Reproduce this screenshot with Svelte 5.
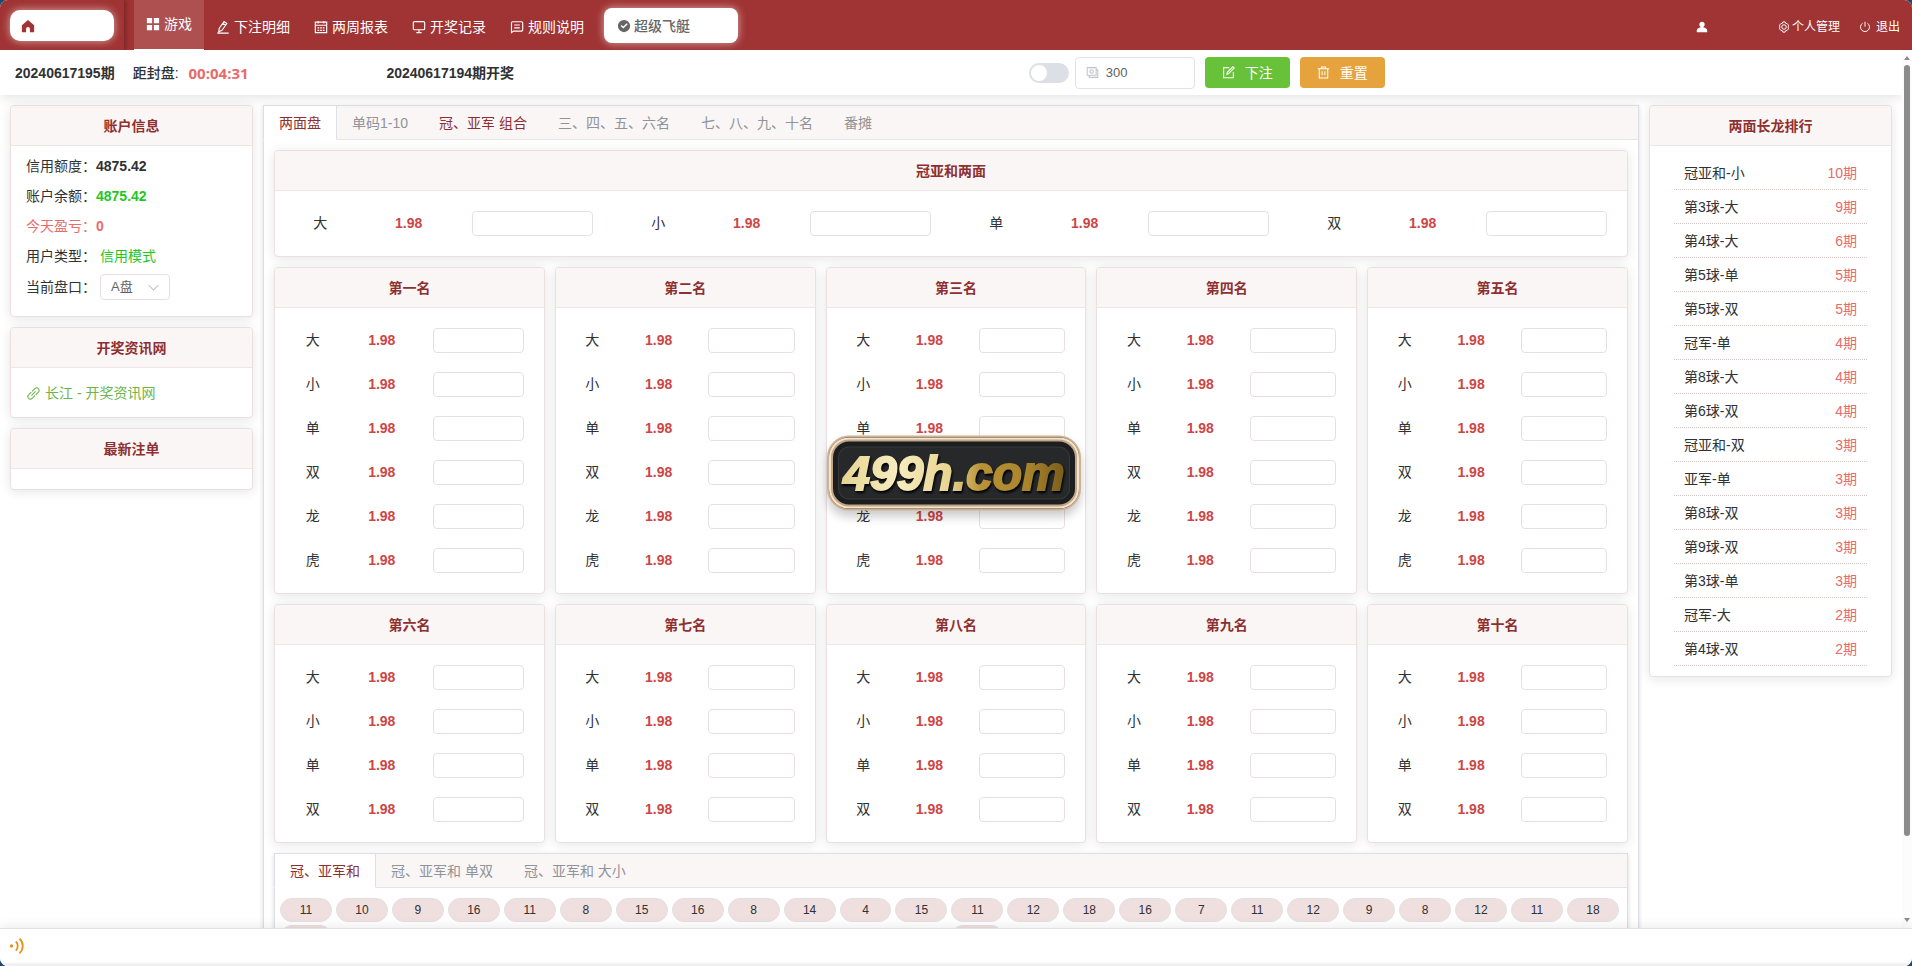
<script lang="ts">
	type Icon = { d: string; solid?: boolean };

	const icons: Record<string, Icon> = {
		home: { d: 'M8 1.2 15 7v8H10.2v-3.6a2.2 2.2 0 0 0-4.4 0V15H1V7z', solid: true },
		grid: { d: 'M1 1h6v6H1zM9 1h6v6H9zM1 9h6v6H1zM9 9h6v6H9z', solid: true },
		edit: { d: 'M9.2 1.8 3.6 9.6 3.2 13.6 6.8 11.8 12.4 4zM7.8 3.8 11 6.1M1.5 15h13' },
		calendar: { d: 'M1.5 2.5h13v12h-13zM1.5 6h13M4.8 1v3M11.2 1v3M4 9h2M7 9h2M10 9h2M4 11.8h2M7 11.8h2M10 11.8h2' },
		monitor: { d: 'M3 1.8h10a1.5 1.5 0 0 1 1.5 1.5v6.4a1.5 1.5 0 0 1-1.5 1.5H3a1.5 1.5 0 0 1-1.5-1.5V3.300A1.5 1.5 0 0 1 3 1.800zM8 11.200V14.500M5 14.500h6' },
		message: { d: 'M1.700 14.500V3.200a1.200 1.200 0 0 1 1.200-1.200h10.400a1.200 1.200 0 0 1 1.200 1.200v8.300a1.200 1.200 0 0 1-1.200 1.200H4zM4.800 5.700h6.400M4.800 9h6.400' },
		check: { d: 'M8 1a7 7 0 1 0 0 14A7 7 0 0 0 8 1zM7.200 10.900 4.200 7.900l1.100-1.100 1.900 1.900 3.900-3.900 1.100 1.100z', solid: true },
		user: { d: 'M8 1a3.600 3.600 0 0 1 2.200 6.500l-.6.9c3 .4 5.400 2 5.400 5V15H1v-1.600c0-3 2.400-4.600 5.400-5l-.6-.9A3.600 3.600 0 0 1 8 1z', solid: true },
		setting: { d: 'M6.500 1.200h3l.7 1.900 2 .3 1.900 2.400-.7 2.200.7 2.200-1.900 2.400-2 .3-.7 1.900h-3l-.7-1.900-2-.3-1.900-2.400.7-2.200-.7-2.200 1.900-2.400 2-.3zM8 5a3 3 0 1 0 0 6 3 3 0 0 0 0-6z' },
		power: { d: 'M4.800 3a6 6 0 1 0 6.400 0M8 1v6.500' },
		money: { d: 'M1.500 2h11v9.500h-11zM12.500 4.500h2V14H4v-2.500M7 4.500a2.200 2.200 0 1 0 0 4.400 2.200 2.200 0 0 0 0-4.400z' },
		compose: { d: 'M9 2H2v12.500h12V7.500M6 10.300l.5-2.500L13.500.8l1.600 1.600-7 7z' },
		trash: { d: 'M1 3.500h14M5.500 3.500V1.200h5v2.300M2.800 3.500v11.300h10.400V3.500M6.300 6.500v5M9.700 6.500v5' },
		link: { d: 'M5.500 10.500 10.500 5.500M6.300 5.300 9.600 2a3 3 0 0 1 4.400 4.400l-3.300 3.300M9.700 10.700 6.400 14A3 3 0 0 1 2 9.600l3.300-3.300' },
		arrow: { d: 'M2 5l6 6 6-6' },
		sound: { d: 'M2.500 7.200a.8.8 0 1 1 0 1.600.8.8 0 0 1 0-1.600M6.800 3.500c2.600 2.200 2.600 6.800 0 9M10.500 .8c4.300 3.600 4.300 10.800 0 14.400' }
	};

	const menu = [
		{ icon: 'edit', label: '下注明细' },
		{ icon: 'calendar', label: '两周报表' },
		{ icon: 'monitor', label: '开奖记录' },
		{ icon: 'message', label: '规则说明' }
	];

	const tabs = [
		{ label: '两面盘', active: true },
		{ label: '单码1-10' },
		{ label: '冠、亚军 组合', marked: true },
		{ label: '三、四、五、六名' },
		{ label: '七、八、九、十名' },
		{ label: '番摊' }
	];

	const ranks = ['冠、亚军和', '冠、亚军和 单双', '冠、亚军和 大小'];

	const sides = ['大', '小', '单', '双'];
	const groupRows = [
		{ names: ['第一名', '第二名', '第三名', '第四名', '第五名'], bets: [...sides, '龙', '虎'] },
		{ names: ['第六名', '第七名', '第八名', '第九名', '第十名'], bets: sides }
	];

	// each entry is one column of the road map, top to bottom
	const history = [
		['11', ''], ['10'], ['9'], ['16'], ['11'], ['8'], ['15'], ['16'], ['8'], ['14'], ['4'], ['15'],
		['11', ''], ['12'], ['18'], ['16'], ['7'], ['11'], ['12'], ['9'], ['8'], ['12'], ['11'], ['18']
	];

	const streaks: [string, number][] = [
		['冠亚和-小', 10],
		['第3球-大', 9],
		['第4球-大', 6],
		['第5球-单', 5],
		['第5球-双', 5],
		['冠军-单', 4],
		['第8球-大', 4],
		['第6球-双', 4],
		['冠亚和-双', 3],
		['亚军-单', 3],
		['第8球-双', 3],
		['第9球-双', 3],
		['第3球-单', 3],
		['冠军-大', 2],
		['第4球-双', 2]
	];

	let amount = $state('300');
	let quick = $state(false);
</script>

{#snippet icon(name: string)}
	<svg class="icon" class:solid={icons[name].solid} viewBox="0 0 16 16" aria-hidden="true">
		<path d={icons[name].d} />
	</svg>
{/snippet}

{#snippet bet(group: string, label: string)}
	<label class="bet">
		<span class="bet-name">{label}</span>
		<span class="odds">1.98</span>
		<input type="text" aria-label="{group} {label}" />
	</label>
{/snippet}

<div class="app">
	<header class="topbar">
		<div class="brand">
			<a href="#home" class="logo" aria-label="首页">{@render icon('home')}</a>
		</div>
		<nav class="menu">
			<a href="#game" class="menu-game">{@render icon('grid')}游戏</a>
			{#each menu as item}
				<a href="#menu" class="menu-item">{@render icon(item.icon)}{item.label}</a>
			{/each}
		</nav>
		<button class="game-picker">{@render icon('check')}超级飞艇</button>
		<div class="account">
			<span class="user">{@render icon('user')}</span>
			<a href="#profile" class="profile">{@render icon('setting')}个人管理</a>
			<a href="#logout" class="logout">{@render icon('power')}退出</a>
		</div>
	</header>

	<div class="body">
		<div class="page">
			<div class="toolbar">
				<div class="period">
					<b>20240617195期</b>
					<span>距封盘:</span>
					<b class="countdown">00:04:31</b>
				</div>
				<b>20240617194期开奖</b>
				<div class="actions">
					<input class="switch" type="checkbox" role="switch" aria-label="快捷" bind:checked={quick} />
					<label class="amount">
						{@render icon('money')}
						<input type="text" aria-label="金额" bind:value={amount} />
					</label>
					<button class="btn submit">{@render icon('compose')}下注</button>
					<button class="btn reset">{@render icon('trash')}重置</button>
				</div>
			</div>

			<div class="columns">
				<aside>
					<section class="card">
						<h2>账户信息</h2>
						<div class="info">
							<div>信用额度：<b>4875.42</b></div>
							<div>账户余额：<b class="green">4875.42</b></div>
							<div class="loss">今天盈亏：<b>0</b></div>
							<div>用户类型：<span class="green value">信用模式</span></div>
							<div class="plate">
								<label for="plate">当前盘口：</label>
								<span class="select">
									<select id="plate"><option>A盘</option></select>
									{@render icon('arrow')}
								</span>
							</div>
						</div>
					</section>
					<section class="card">
						<h2>开奖资讯网</h2>
						<div class="links">
							<a href="#news">{@render icon('link')}长江 - 开奖资讯网</a>
						</div>
					</section>
					<section class="card">
						<h2>最新注单</h2>
						<div class="orders"></div>
					</section>
				</aside>

				<main class="tab-box">
					<div class="tabs">
						{#each tabs as tab}
							<button class:active={tab.active} class:marked={tab.marked}>{tab.label}</button>
						{/each}
					</div>
					<div class="panel">
						<section class="card">
							<h2>冠亚和两面</h2>
							<div class="bets bets-row">
								{#each sides as side}
									{@render bet('冠亚和', side)}
								{/each}
							</div>
						</section>

						{#each groupRows as row}
							<div class="groups">
								{#each row.names as name}
									<div class="group">
										<section class="card">
											<h2>{name}</h2>
											<div class="bets">
												{#each row.bets as side}
													{@render bet(name, side)}
												{/each}
											</div>
										</section>
									</div>
								{/each}
							</div>
						{/each}

						<section class="tab-box">
							<div class="tabs">
								{#each ranks as rank, i}
									<button class:active={i === 0}>{rank}</button>
								{/each}
							</div>
							<div class="history">
								{#each history as column}
									<div class="history-col">
										{#each column as num}
											<span>{num}</span>
										{/each}
									</div>
								{/each}
							</div>
						</section>
					</div>
				</main>

				<aside>
					<section class="card">
						<h2>两面长龙排行</h2>
						<ul class="streaks">
							{#each streaks as [name, count]}
								<li><span>{name}</span><span class="count">{count}期</span></li>
							{/each}
						</ul>
					</section>
				</aside>
			</div>
		</div>
		<div class="scrollbar">
			<i class="up"></i>
			<i class="thumb"></i>
			<i class="down"></i>
		</div>
	</div>

	<footer>{@render icon('sound')}</footer>

	<div class="badge"><span>499h.com</span></div>
</div>

<style>
	:global(body) {
		background: #1b4b73;
		overflow: hidden;
	}

	.app {
		position: relative;
		display: flex;
		flex-direction: column;
		height: 100vh;
		border-radius: 8px;
		overflow: hidden;
		background: #fff;
		color: #303133;
		font-family: 'Liberation Sans', 'Noto Sans CJK SC', sans-serif;
		font-size: 14px;
		line-height: 20px;
	}

	.app * {
		box-sizing: border-box;
	}

	a {
		color: inherit;
		text-decoration: none;
	}

	button,
	input,
	select {
		font: inherit;
		color: inherit;
		margin: 0;
	}

	.icon {
		width: 14px;
		height: 14px;
		flex-shrink: 0;
		fill: none;
		stroke: currentColor;
		stroke-width: 1.3;
	}

	.icon.solid {
		fill: currentColor;
		fill-rule: evenodd;
		stroke: none;
	}

	/* Top bar */
	.topbar {
		display: flex;
		flex-shrink: 0;
		height: 50px;
		background: #a03333;
		color: #fff;
	}

	.brand {
		width: 124px;
		padding: 10px;
		box-shadow: 2px 0 4px rgba(0, 0, 0, 0.25);
	}

	.logo {
		display: flex;
		align-items: center;
		height: 31px;
		padding-left: 11px;
		border-radius: 10px;
		background: #fff;
		color: #a03333;
		box-shadow: 0 0 8px rgba(255, 255, 255, 0.6);
	}

	.menu {
		display: flex;
		margin-left: 10px;
	}

	.menu a {
		display: flex;
		align-items: center;
		gap: 4px;
		padding: 4px 12px 0;
	}

	.menu .menu-game {
		padding: 0 12px 1px;
		border-bottom: 1px solid #fff;
		background: #ae4f50;
	}

	.game-picker {
		display: flex;
		align-items: center;
		gap: 3px;
		width: 134px;
		height: 35px;
		margin: 8px 0 0 8px;
		padding: 0 13px;
		border: 0;
		border-radius: 8px;
		background: #fff;
		color: #666;
		font-weight: 500;
		box-shadow: 0 0 8px rgba(255, 255, 255, 0.6);
	}

	.account {
		display: flex;
		align-items: center;
		margin-left: auto;
		padding: 4px 12px 0 0;
		font-size: 12px;
	}

	.account .icon {
		width: 12px;
		height: 12px;
	}

	.user,
	.profile,
	.logout {
		display: flex;
		align-items: center;
		gap: 2px;
	}

	.user {
		margin-right: 70px;
	}

	.logout {
		gap: 5px;
		margin-left: 19px;
	}

	/* Page */
	.body {
		display: flex;
		flex: 1;
		min-height: 0;
	}

	.page {
		flex: 1;
		min-width: 0;
		overflow: hidden;
	}

	.toolbar {
		position: relative;
		display: grid;
		grid-template-columns: 37fr 64fr 87fr;
		align-items: center;
		height: 45px;
		padding-left: 15px;
		background: #fff;
		box-shadow: 0 2px 12px rgba(0, 0, 0, 0.12);
	}

	.period {
		display: flex;
		align-items: center;
	}

	.period span {
		margin: 0 10px 0 18px;
		font-weight: 500;
	}

	.countdown {
		color: #e66b6b;
		font-family: 'Open Sans', 'Noto Sans', sans-serif;
		font-size: 15px;
		line-height: 18px;
	}

	.actions {
		display: flex;
		align-items: center;
	}

	.switch {
		position: relative;
		appearance: none;
		width: 40px;
		height: 20px;
		margin-right: 6px;
		border-radius: 10px;
		background: #dcdfe6;
	}

	.switch::before {
		content: '';
		position: absolute;
		top: 2px;
		left: 2px;
		width: 16px;
		height: 16px;
		border-radius: 50%;
		background: #fff;
	}

	.switch:checked {
		background: #a03333;
	}

	.switch:checked::before {
		left: 22px;
	}

	.amount {
		display: flex;
		align-items: center;
		gap: 7px;
		width: 120px;
		height: 32px;
		margin-right: 10px;
		padding: 0 10px;
		border: 1px solid #e8dfe0;
		border-radius: 4px;
		color: #c0c4cc;
	}

	.amount .icon {
		width: 13px;
		height: 13px;
	}

	.amount input {
		width: 100%;
		min-width: 0;
		padding: 0;
		border: 0;
		outline: 0;
		color: #606266;
		font-size: 13px;
	}

	.btn {
		display: flex;
		align-items: center;
		justify-content: center;
		gap: 10px;
		width: 85px;
		height: 31px;
		margin-right: 10px;
		border: 0;
		border-radius: 4px;
		color: #fff;
	}

	.btn .icon {
		width: 13px;
		height: 13px;
	}

	.submit {
		background: #67c23a;
	}

	.reset {
		background: #e6a23c;
	}

	.columns {
		display: flex;
		align-items: flex-start;
		gap: 10px;
		padding: 10px;
	}

	aside {
		display: flex;
		flex-direction: column;
		flex-shrink: 0;
		gap: 10px;
		width: 243px;
	}

	/* Cards */
	.card {
		border: 1px solid #ebdfe0;
		border-radius: 4px;
		background: #fff;
		box-shadow: 0 2px 12px rgba(0, 0, 0, 0.1);
		overflow: hidden;
	}

	.card h2 {
		height: 40px;
		margin: 0;
		border-bottom: 1px solid #f0e6e6;
		background: #faf6f5;
		color: #8e3031;
		font-size: 14px;
		font-weight: 700;
		line-height: 40px;
		text-align: center;
	}

	.info {
		padding: 5px 15px 13px;
		line-height: 30px;
	}

	.green {
		color: #1fc71f;
	}

	.value {
		margin-left: 4px;
	}

	.loss {
		color: #e66b6b;
	}

	.plate {
		display: flex;
		align-items: center;
		height: 32px;
	}

	.select {
		position: relative;
		margin-left: 4px;
		color: #606266;
		font-size: 13px;
	}

	.select select {
		display: block;
		appearance: none;
		width: 70px;
		height: 26px;
		padding: 0 10px;
		border: 1px solid #e8dfe0;
		border-radius: 4px;
		background: #fff;
		line-height: 20px;
	}

	.select .icon {
		position: absolute;
		top: 7px;
		right: 10px;
		width: 13px;
		height: 13px;
		color: #c0c4cc;
		pointer-events: none;
	}

	.links {
		padding: 15px 16px 14px;
		color: #6cb54a;
	}

	.links a {
		display: flex;
		align-items: center;
		gap: 5px;
	}

	.links .icon {
		width: 13px;
		height: 13px;
	}

	.orders {
		height: 20px;
	}

	/* Tabs */
	.tab-box {
		flex: 1;
		min-width: 0;
		border: 1px solid #dcdfe6;
		background: #fff;
		box-shadow: 0 2px 4px rgba(0, 0, 0, 0.12), 0 0 6px rgba(0, 0, 0, 0.04);
	}

	.tabs {
		display: flex;
		height: 34px;
		border-bottom: 1px solid #e4e4ea;
		background: #faf6f5;
	}

	.tabs button {
		height: 35px;
		margin: -1px 0 0 -1px;
		padding: 0 15px;
		border: 1px solid transparent;
		background: none;
		color: #909399;
	}

	.tabs .marked {
		color: #8e3031;
	}

	.tabs .active {
		border-color: #dcdfe6;
		border-bottom-color: #fff;
		background: #fff;
		color: #8e3031;
	}

	.panel {
		display: flex;
		flex-direction: column;
		gap: 10px;
		padding: 10px;
	}

	/* Bets */
	.groups {
		display: flex;
	}

	.group {
		flex: 0 0 20%;
		padding-left: 10px;
	}

	.group:first-child {
		padding-left: 0;
	}

	.bets {
		padding: 10px 0 11px;
	}

	.bets-row {
		display: grid;
		grid-template-columns: repeat(4, 1fr);
	}

	.bet {
		display: grid;
		grid-template-columns: 2fr 3fr 4fr;
		align-items: center;
		height: 44px;
		padding: 0 10px;
		text-align: center;
	}

	.odds {
		color: #cc4646;
		font-weight: 700;
	}

	.bet input {
		min-width: 0;
		height: 25px;
		margin: 0 10px;
		padding: 0 8px;
		border: 1px solid #e8dfe0;
		border-radius: 4px;
		outline: 0;
	}

	.history {
		display: flex;
		padding: 10px 6px 10px 3px;
	}

	.history-col {
		display: flex;
		flex-direction: column;
		flex: 1;
		gap: 3px;
		padding: 0 2px;
	}

	.history-col span {
		height: 24px;
		border: 1px solid #e4dfe4;
		border-radius: 12px;
		background: #f0dfdf;
		font-size: 12px;
		line-height: 22px;
		text-align: center;
	}

	.streaks {
		margin: 0;
		padding: 10px 24px;
		list-style: none;
	}

	.streaks li {
		display: flex;
		justify-content: space-between;
		height: 34px;
		padding: 0 10px;
		border-bottom: 1px dotted #d8c4c4;
		line-height: 34px;
	}

	.count {
		color: #e66b6b;
	}

	.scrollbar {
		display: flex;
		flex-direction: column;
		align-items: center;
		width: 10px;
		padding: 6px 0;
		background: #fcfcfc;
	}

	.scrollbar .up,
	.scrollbar .down {
		border: 3px solid transparent;
	}

	.scrollbar .up {
		border-top: 0;
		border-bottom: 4px solid #8a8a8a;
	}

	.scrollbar .down {
		margin-top: auto;
		border-bottom: 0;
		border-top: 4px solid #8a8a8a;
	}

	.scrollbar .thumb {
		width: 6px;
		height: 89%;
		margin-top: 5px;
		border-radius: 3px;
		background: #8b8b8b;
	}

	footer {
		position: relative;
		display: flex;
		flex-shrink: 0;
		align-items: center;
		height: 38px;
		padding-left: 9px;
		border-top: 1px solid #e8dfe0;
		border-bottom: 3px solid #f1f1f1;
		background: #fff;
		color: #e6921e;
		box-shadow: 0 -2px 10px rgba(0, 0, 0, 0.08);
	}

	footer .icon {
		width: 16px;
		height: 16px;
		stroke-width: 1.8;
	}

	/* Floating site badge */
	.badge {
		position: absolute;
		top: 49%;
		left: 50%;
		display: flex;
		align-items: center;
		justify-content: center;
		width: 254px;
		height: 75px;
		margin-left: -2px;
		border: 2px solid #cdb296;
		border-radius: 22px;
		background: #26282a;
		box-shadow:
			inset 0 0 0 2px #f3e4cc,
			inset 0 0 0 4px #c0a587,
			inset 0 0 0 9px #1d1e20,
			inset 0 0 0 10px #36383a,
			0 6px 10px rgba(0, 0, 0, 0.2);
		transform: translate(-50%, -50%);
	}

	.badge span {
		padding: 0 4px;
		background: linear-gradient(90deg, #e6d38f, #f7ecc0 25%, #e8d592 48%, #b89235 62%, #a8842c 82%, #75591a);
		background-clip: text;
		color: transparent;
		-webkit-text-stroke: 2px transparent;
		filter: drop-shadow(1px 2px 1px #000);
		font-family: 'Liberation Sans', sans-serif;
		font-size: 48px;
		font-style: italic;
		font-weight: 700;
		line-height: 64px;
	}
</style>
